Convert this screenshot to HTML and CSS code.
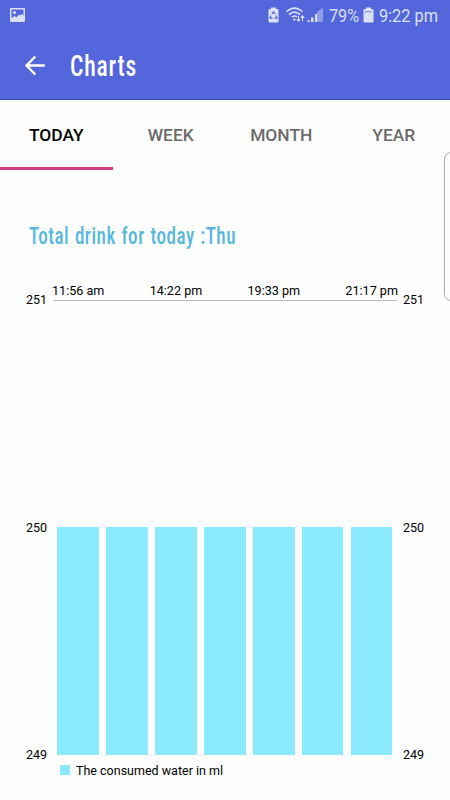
FILE: index.html
```html
<!DOCTYPE html>
<html lang="en">
<head>
    <meta charset="UTF-8">
    <title>Charts</title>
    <link rel="stylesheet" href="styles.css">
</head>
<body>

    <header class="header">
        <div class="status-bar">
            <svg class="icon-picture" width="16" height="15" viewBox="0 0 16 15">
                <path fill="#dbe0fb" fill-rule="evenodd" d="M1 0h13a1 1 0 0 1 1 1v12a1 1 0 0 1-1 1H1a1 1 0 0 1-1-1V1a1 1 0 0 1 1-1zM1.500 1.500v8.500l3-2 2 1.300 2.500-2.800 1.500 1 1.500-1.500 1.500 1.500V1.500z"/>
                <circle cx="4.500" cy="4.500" r="1.500" fill="#dbe0fb"/>
            </svg>
            <svg class="status-icons" width="183" height="32" viewBox="0 0 183 32">
                <!-- battery saver -->
                <path fill="#dbe0fb" d="M4 7.500h5v1.500h1.500q1 0 1 1v11.500q0 1-1 1h-8q-1 0-1-1V10q0-1 1-1H4z"/>
                <path fill="none" stroke="#5366dc" stroke-width="1.200" d="M4.800 14.200l1.700-2.300 1.700 2.300M9 15.600l1 2.600H7.300M5.500 18.200H3l1-2.600"/>
                <!-- wifi -->
                <g fill="none" stroke="#dbe0fb" stroke-width="1.500">
                    <path d="M19.500 11.800q8-7.400 16 0"/>
                    <path d="M22 14.600q5.500-5 11 0"/>
                    <path d="M24.600 17.300q2.900-2.500 5.500-.3"/>
                </g>
                <path fill="#dbe0fb" d="M25.800 19.300q1.600-1.400 3 0l-1.500 1.700z"/>
                <path fill="none" stroke="#dbe0fb" stroke-width="1.100" d="M31.500 16v5M29.800 19.300l1.700 1.900 1.700-1.900M35.500 21v-5M33.800 17.800l1.700-1.900 1.700 1.900"/>
                <!-- signal -->
                <path fill="#dbe0fb" d="M40.500 20h2v2h-2zM44 17.500h2.500V22H44zM48 14h2v8h-2z"/>
                <path fill="#8f9ceb" d="M50 12l6-4.500V22h-6z"/>
                <text class="status-text" x="62" y="22" textLength="30" lengthAdjust="spacingAndGlyphs">79%</text>
                <!-- battery -->
                <path fill="#dbe0fb" d="M99 7.500h5V9h1.500q1 0 1 1V21.500q0 1-1 1h-8q-1 0-1-1V10q0-1 1-1H99z"/>
                <path fill="#8f9ceb" d="M98 11h7v1.300h-7z"/>
                <text class="status-text" x="112" y="22" textLength="59" lengthAdjust="spacingAndGlyphs">9:22 pm</text>
            </svg>
        </div>
        <div class="toolbar">
            <svg class="icon-back" width="20" height="20" viewBox="0 0 20 20">
                <path d="M19.700 9.500H1.800M10.300 .5L1.500 9.500l8.800 9"/>
            </svg>
            <svg class="title" width="100" height="48">
                <text x="0" y="34" textLength="67" lengthAdjust="spacingAndGlyphs">Charts</text>
            </svg>
        </div>
    </header>

    <nav class="tabs">
        <div class="tab active">TODAY</div>
        <div class="tab week">WEEK</div>
        <div class="tab">MONTH</div>
        <div class="tab">YEAR</div>
    </nav>

    <div class="edge-handle"></div>

    <main class="content">
        <svg class="heading" width="260" height="34">
            <text x="0" y="24" textLength="207" lengthAdjust="spacingAndGlyphs">Total drink for today :Thu</text>
        </svg>

        <div class="times">
            <span>11:56 am</span>
            <span>14:22 pm</span>
            <span>19:33 pm</span>
            <span>21:17 pm</span>
        </div>
        <div class="chart">
            <div class="axis left"><span>251</span><span>250</span><span>249</span></div>
            <div class="plot">
                <div class="bar"></div>
                <div class="bar"></div>
                <div class="bar"></div>
                <div class="bar"></div>
                <div class="bar"></div>
                <div class="bar"></div>
                <div class="bar"></div>
            </div>
            <div class="axis right"><span>251</span><span>250</span><span>249</span></div>
        </div>
        <div class="legend">
            <div class="legend-color"></div>
            <span>The consumed water in ml</span>
        </div>
    </main>

</body>
</html>
```

FILE: styles.css
```css
*{
    margin: 0;
    padding: 0;
    box-sizing: border-box;
}

body{
    width: 450px;
    height: 800px;
    overflow: hidden;
    position: relative;
    background-color: #fefefe;
    font-family: Roboto, "Liberation Sans", sans-serif;
    color: #000;
}

svg{
    display: block;
    overflow: visible;
}

.header{
    height: 100px;
    background-color: #5366dc;
    border-bottom: 1px solid #3547a8;
}

.status-bar{
    display: flex;
    justify-content: space-between;
    height: 32px;
    padding-left: 10px;
}

.icon-picture{
    margin-top: 8px;
}

.status-text{
    font-size: 19px;
    fill: #dbe0fb;
}

.toolbar{
    display: flex;
    align-items: center;
    height: 67px;
    padding-left: 25px;
}

.icon-back{
    fill: none;
    stroke: #fff;
    stroke-width: 2.4;
}

.title{
    margin-left: 25px;
    font-size: 29px;
    font-stretch: 75%;
    font-weight: 500;
    letter-spacing: 1px;
    fill: #fff;
}

.tabs{
    display: flex;
    height: 70px;
}

.tab{
    width: 112.5px;
    height: 70px;
    line-height: 71px;
    text-align: center;
    font-size: 17.4px;
    font-weight: 500;
    color: #6b6b6b;
}

.tab.week{
    padding-left: 4px;
}

.tab.active{
    color: #000;
    border-bottom: 3px solid #d33a80;
}

/* panel handle at the screen edge */
.edge-handle{
    position: absolute;
    left: 444px;
    top: 152px;
    width: 20px;
    height: 149px;
    border: 1px solid #aaa;
    border-radius: 7px;
}

.content{
    padding-top: 50px;
}

.heading{
    margin-left: 29px;
    font-size: 23.5px;
    font-stretch: 75%;
    font-weight: 500;
    letter-spacing: 0.6px;
    word-spacing: 1px;
    fill: #57b8df;
}

.times{
    display: flex;
    justify-content: space-between;
    margin: 28px 52px 0 52px;
    height: 18px;
    line-height: 17px;
    font-size: 12.6px;
}

.chart{
    display: flex;
    height: 455px;
}

.axis{
    display: flex;
    flex-direction: column;
    justify-content: space-between;
    height: 471px;
    margin-top: -8px;
    font-size: 12.5px;
    line-height: 16px;
}

.axis.left{
    width: 54px;
    padding-left: 26px;
}

.axis.right{
    padding-left: 6px;
}

.plot{
    display: flex;
    align-items: flex-end;
    gap: 7.2px;
    width: 343px;
    padding-left: 3.4px;
    border-top: 1px solid #b9b9b9;
}

.bar{
    width: 41.7px;
    height: 228px;
    background-color: #8ceafe;
}

.legend{
    display: flex;
    align-items: center;
    height: 16px;
    margin-top: 7px;
    padding-left: 60px;
    font-size: 12.5px;
}

.legend-color{
    width: 10px;
    height: 10px;
    margin-right: 6px;
    background-color: #8ceafe;
}
```
